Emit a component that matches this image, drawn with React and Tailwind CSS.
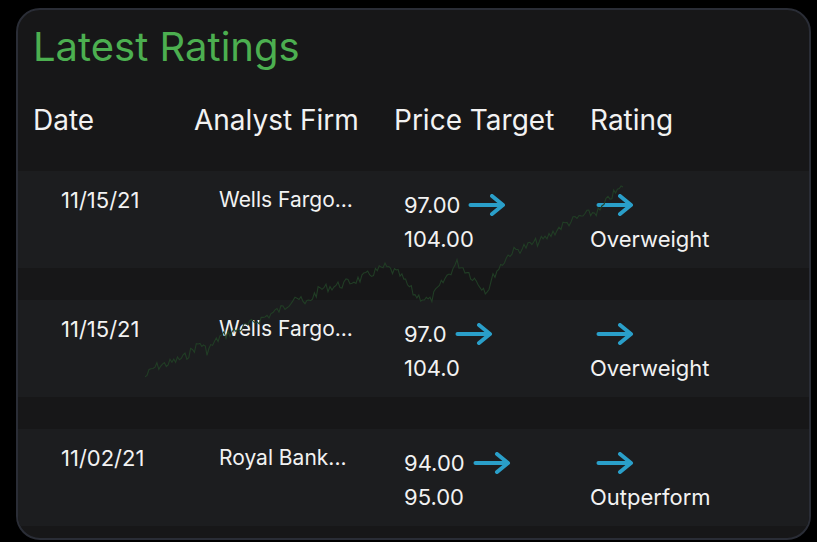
import React from "react";

function Arrow() {
  return (
    <svg width="38" height="22" viewBox="0 0 38 22" className="inline-block shrink-0">
      <path d="M2.5 11 H34" stroke="#2a9fc9" strokeWidth="4" strokeLinecap="round" fill="none" />
      <path d="M24 2 L35 11 L24 20" stroke="#2a9fc9" strokeWidth="4" strokeLinecap="round" strokeLinejoin="round" fill="none" />
    </svg>
  );
}

function Chart() {
  const anchors = [
    [0, 210], [10, 200], [25, 196], [40, 190], [55, 176], [62, 184], [75, 170], [95, 162],
    [120, 150], [140, 140], [150, 128], [160, 138], [175, 122], [195, 118], [215, 112],
    [240, 100], [255, 108], [270, 128], [285, 134], [300, 112], [312, 96], [322, 104],
    [335, 118], [342, 124], [350, 106], [365, 86], [385, 78], [400, 72], [418, 58],
    [440, 48], [455, 44], [465, 30], [478, 20],
  ];
  let seed = 7;
  const rnd = () => {
    seed = (seed * 9301 + 49297) % 233280;
    return seed / 233280;
  };
  const pts = [];
  for (let i = 0; i < anchors.length - 1; i++) {
    const [x1, y1] = anchors[i];
    const [x2, y2] = anchors[i + 1];
    const steps = Math.max(2, Math.round((x2 - x1) / 2));
    for (let s = 0; s < steps; s++) {
      const t = s / steps;
      const x = x1 + (x2 - x1) * t;
      const y = y1 + (y2 - y1) * t + (rnd() - 0.5) * 9;
      pts.push(`${x.toFixed(1)},${y.toFixed(1)}`);
    }
  }
  pts.push(anchors[anchors.length - 1].join(","));
  return (
    <svg
      width="490"
      height="220"
      viewBox="0 0 490 220"
      className="absolute left-[127px] top-[-4px] pointer-events-none"
    >
      <polyline points={pts.join(" ")} fill="none" stroke="#213d25" strokeWidth="1.1" />
    </svg>
  );
}

const rows = [
  { date: "11/15/21", firm: "Wells Fargo...", from: "97.00", to: "104.00", rating: "Overweight" },
  { date: "11/15/21", firm: "Wells Fargo...", from: "97.0", to: "104.0", rating: "Overweight" },
  { date: "11/02/21", firm: "Royal Bank...", from: "94.00", to: "95.00", rating: "Outperform" },
];

export default function App() {
  return (
    <div
      className="w-[817px] h-[542px] bg-black overflow-hidden pt-2 pl-4"
      style={{ fontFamily: "Inter, 'Noto Sans', sans-serif" }}
    >
      <div className="w-[795px] h-[532px] rounded-[24px] border-2 border-[#2a2d36] bg-[#171718] overflow-hidden flex flex-col">
        <div className="pt-[13px] pl-[15px] text-[40px] leading-[48px] text-[#4caf50]">Latest Ratings</div>
        <div className="mt-[32px] grid grid-cols-[161px_200px_196px_1fr] pl-[15px] text-[28px] leading-[34px] text-[#f2f2f2]">
          <div>Date</div>
          <div>Analyst Firm</div>
          <div>Price Target</div>
          <div>Rating</div>
        </div>
        <div className="relative mt-[34px] flex flex-col gap-[32px]">
          {rows.map((r, i) => (
            <div
              key={i}
              className="h-[97px] bg-[#1c1d1f] grid grid-cols-[161px_200px_196px_1fr] pl-[15px] text-[22px] text-[#f2f2f2]"
            >
              <div className="pl-[28px] pt-[15px] leading-[28px]">{r.date}</div>
              <div className="pl-[25px] pt-[15px] leading-[28px] text-[21px]">{r.firm}</div>
              <div className="pl-[10px] pt-[17px] leading-[34px]">
                <div className="flex items-center gap-[8px]">
                  <span>{r.from}</span>
                  <Arrow />
                </div>
                <div>{r.to}</div>
              </div>
              <div className="pt-[17px] leading-[34px]">
                <div className="flex items-center h-[34px] pl-[6px]">
                  <Arrow />
                </div>
                <div>{r.rating}</div>
              </div>
            </div>
          ))}
          <Chart />
        </div>
      </div>
    </div>
  );
}
